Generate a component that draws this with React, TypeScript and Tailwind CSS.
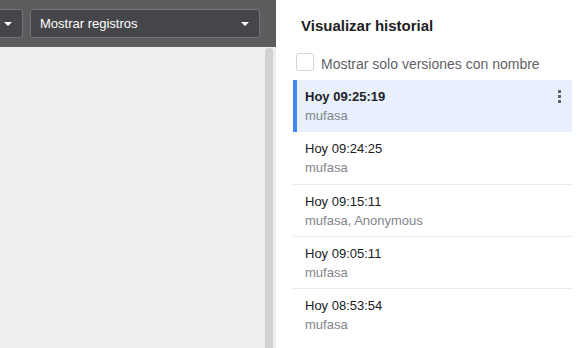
import React from "react";

const items = [
  { time: "Hoy 09:25:19", who: "mufasa", selected: true },
  { time: "Hoy 09:24:25", who: "mufasa" },
  { time: "Hoy 09:15:11", who: "mufasa, Anonymous" },
  { time: "Hoy 09:05:11", who: "mufasa" },
  { time: "Hoy 08:53:54", who: "mufasa" },
];

function Caret() {
  return (
    <svg width="8" height="4" viewBox="0 0 8 4" className="shrink-0">
      <path d="M0 0 L8 0 L4 4 Z" fill="#ffffff" />
    </svg>
  );
}

export default function App() {
  return (
    <div className="flex w-[587px] h-[348px] overflow-hidden bg-white font-['Liberation_Sans',Arial,sans-serif]">
      <div className="w-[276px] shrink-0 flex flex-col bg-[#eceef0]">
        <div className="h-[47px] shrink-0 bg-[#5b5c5e] flex items-center gap-[7px] overflow-hidden">
          <div className="-ml-[17px] w-[40px] h-[29px] shrink-0 rounded-[3px] border border-[#737476] bg-[#454649] flex items-center justify-end pr-[10px]">
            <Caret />
          </div>
          <div className="w-[230px] h-[29px] shrink-0 rounded-[3px] border border-[#737476] bg-[#454649] flex items-center justify-between pl-[9px] pr-[10px]">
            <span className="text-[13px] text-white">Mostrar registros</span>
            <Caret />
          </div>
        </div>
        <div className="flex-1 flex justify-end pr-[3px] pt-[1px]">
          <div className="w-[8px] h-full bg-[#d0d1d3] rounded-t-[4px]" />
        </div>
      </div>
      <div className="flex-1 bg-white pl-[17px] pr-[15px] pt-[16px]">
        <div className="pl-[8px] text-[15px] leading-[20px] font-bold text-[#202124]">
          Visualizar historial
        </div>
        <div className="mt-[17px] mb-[5px] flex items-start pl-[3px]">
          <div className="w-[18px] h-[18px] rounded-[3px] border-[1.5px] border-[#d4d5d7] bg-white shrink-0" />
          <span className="ml-[7px] text-[14px] leading-[22px] text-[#5f6368]">
            Mostrar solo versiones con nombre
          </span>
        </div>
        <div className="flex flex-col">
          {items.map((it, i) => (
            <div
              key={it.time}
              className={
                it.selected
                  ? "relative h-[52px] shrink-0 border-l-4 border-[#4285f4] bg-[#e8f0fe] pl-[8px] pt-[7px]"
                  : i === 1
                  ? "relative h-[52px] shrink-0 pl-[12px] pt-[7px]"
                  : "relative h-[52px] shrink-0 border-t border-[#e8eaed] pl-[12px] pt-[7px]"
              }
            >
              <div
                className={
                  it.selected
                    ? "text-[13px] leading-[19px] font-bold text-[#202124]"
                    : "text-[13px] leading-[19px] text-[#202124]"
                }
              >
                {it.time}
              </div>
              <div className="text-[13px] leading-[19px] text-[#80868b]">{it.who}</div>
              {it.selected && (
                <svg
                  width="3"
                  height="13"
                  viewBox="0 0 3 13"
                  className="absolute right-[11px] top-[10px]"
                >
                  <rect x="0" y="0" width="3" height="3" fill="#5f6368" />
                  <rect x="0" y="5" width="3" height="3" fill="#5f6368" />
                  <rect x="0" y="10" width="3" height="3" fill="#5f6368" />
                </svg>
              )}
            </div>
          ))}
        </div>
      </div>
    </div>
  );
}
